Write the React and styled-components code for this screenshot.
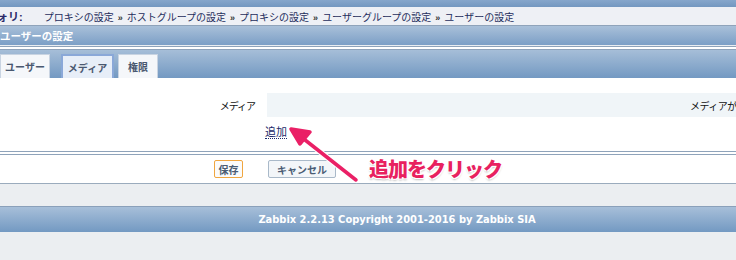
import styled, { createGlobalStyle } from 'styled-components';

const GlobalStyle = createGlobalStyle`
  html, body {
    margin: 0;
    padding: 0;
    background: #ebeef1;
    font-family: "Liberation Sans", "Noto Sans CJK JP", sans-serif;
    font-size: 11px;
  }
`;

const CRUMBS = ['プロキシの設定', 'ホストグループの設定', 'プロキシの設定', 'ユーザーグループの設定', 'ユーザーの設定'];
const TABS = ['ユーザー', 'メディア', '権限'];

const Page = styled.div`
  position: relative;
  width: 736px;
  height: 260px;
  overflow: hidden;
  background: #ebeef1;
`;

const TopBar = styled.div`
  height: 7px;
  background: linear-gradient(#86a6cb, #7397c0);
`;

const Breadcrumbs = styled.div`
  display: flex;
  align-items: center;
  height: 18px;
  background: #eef0f5;
  border-bottom: 1px solid #8fa3ba;
  color: #22305a;
  font-size: 10px;
  white-space: nowrap;
`;

const Favourite = styled.span`
  margin-left: -3px;
  margin-right: 21px;
  font-size: 11px;
  font-weight: bold;
  color: #2a2a6a;
`;

const Crumb = styled.span`
  color: #1e2d5c;
`;

const Sep = styled.span`
  margin: 0 4px;
  font-size: 9px;
  font-weight: bold;
  color: #333;
`;

const HeaderBar = styled.div`
  display: flex;
  align-items: center;
  height: 19px;
  background: linear-gradient(#a9c0d9, #7c9fc6);
  color: #fff;
  font-size: 10.5px;
  font-weight: bold;
`;

const DoubleRule = styled.div`
  height: 2px;
  border-top: 1px solid #8fa3ba;
  border-bottom: 1px solid #8fa3ba;
  background: #fff;
  margin-top: ${(p) => p.$top || 0}px;
`;

const TabBar = styled.div`
  display: flex;
  align-items: flex-end;
  gap: 4px;
  height: 28px;
  background: linear-gradient(#a6bed8, #7399c2);
`;

const Tab = styled.div`
  display: flex;
  align-items: center;
  justify-content: center;
  box-sizing: border-box;
  height: 24px;
  width: ${(p) => p.$width}px;
  margin-left: ${(p) => p.$offset || 0}px;
  background: ${(p) => (p.$active ? '#e7eef8' : '#f5f7fa')};
  border: ${(p) => (p.$active ? '2px solid #8aa8d8' : '1px solid #c9d4e2')};
  border-bottom: none;
  color: #4a5870;
  font-size: 10px;
  font-weight: bold;
`;

const Content = styled.div`
  background: #fff;
  padding-top: 15px;
  height: 58px;
`;

const FormRow = styled.div`
  display: flex;
  align-items: stretch;
  height: 24px;
`;

const Label = styled.div`
  display: flex;
  align-items: center;
  justify-content: flex-end;
  width: 255px;
  padding-right: 12px;
  font-size: 10px;
  letter-spacing: -1px;
  color: #111;
`;

const ValueCell = styled.div`
  display: flex;
  align-items: center;
  flex: 1;
  padding-left: 423px;
  background: #f0f5f8;
  white-space: nowrap;
  overflow: hidden;
  font-size: 10px;
  letter-spacing: -0.5px;
  color: #111;
`;

const AddRow = styled.div`
  padding: 6px 0 0 265px;
`;

const AddLink = styled.span`
  color: #1d2a6a;
  border-bottom: 1px dotted #1d2a6a;
`;

const ButtonRow = styled.div`
  display: flex;
  align-items: center;
  gap: 25px;
  height: 28px;
  padding-left: 214px;
  background: #fff;
  border-bottom: 1px solid #9aabbd;
`;

const Button = styled.div`
  display: flex;
  align-items: center;
  justify-content: center;
  box-sizing: border-box;
  height: 18px;
  width: ${(p) => p.$width}px;
  border: 1px solid ${(p) => (p.$primary ? '#f0a640' : '#a9b9c9')};
  border-radius: 2px;
  background: ${(p) => (p.$primary ? '#fbfbfb' : '#f3f6f9')};
  color: #4a5c74;
  font-size: 10px;
  font-weight: bold;
`;

const Spacer = styled.div`
  height: 22px;
`;

const Footer = styled.div`
  display: flex;
  align-items: center;
  justify-content: center;
  height: 25px;
  padding-left: 58px;
  border-top: 1px solid #8aa0ba;
  background: linear-gradient(#a7bfd9, #7399c2);
  color: #fff;
  font-family: "DejaVu Sans Condensed", "Liberation Sans", sans-serif;
  font-weight: bold;
  font-size: 11px;
`;

const Callout = styled.div`
  position: absolute;
  left: 369px;
  top: 154px;
  color: #e8215f;
  font-family: "Noto Sans CJK JP", sans-serif;
  font-weight: 900;
  font-size: 20px;
  letter-spacing: -1px;
  text-shadow:
    -1px -1px 0 #fff, 1px -1px 0 #fff, -1px 1px 0 #fff, 1px 1px 0 #fff,
    0 2px 2px rgba(0, 0, 0, 0.25);
`;

const ArrowSvg = styled.svg`
  position: absolute;
  left: 280px;
  top: 120px;
`;

const Arrow = () => (
  <ArrowSvg width="90" height="70" viewBox="0 0 90 70">
    <g stroke="#fff" strokeWidth="6" strokeLinecap="round" fill="#fff" strokeLinejoin="round">
      <line x1="76" y1="60" x2="20" y2="16" />
      <polygon points="11,9 30,12 20,24" />
    </g>
    <g stroke="#ea2066" strokeWidth="3.5" strokeLinecap="round" fill="#ea2066" strokeLinejoin="round">
      <line x1="76" y1="60" x2="20" y2="16" />
      <polygon points="11,9 30,12 20,24" />
    </g>
  </ArrowSvg>
);

export default function App() {
  return (
    <>
      <GlobalStyle />
      <Page>
        <TopBar />
        <Breadcrumbs>
          <Favourite>ォリ:</Favourite>
          {CRUMBS.map((c, i) => (
            <span key={i}>
              {i > 0 && <Sep>»</Sep>}
              <Crumb>{c}</Crumb>
            </span>
          ))}
        </Breadcrumbs>
        <HeaderBar>ユーザーの設定</HeaderBar>
        <DoubleRule $top={1} />
        <TabBar>
          <Tab $width={50}>{TABS[0]}</Tab>
          <Tab $width={53} $offset={7} $active>
            {TABS[1]}
          </Tab>
          <Tab $width={40}>{TABS[2]}</Tab>
        </TabBar>
        <Content>
          <FormRow>
            <Label>メディア</Label>
            <ValueCell>メディアが登録されていません</ValueCell>
          </FormRow>
          <AddRow>
            <AddLink>追加</AddLink>
          </AddRow>
        </Content>
        <DoubleRule />
        <ButtonRow>
          <Button $width={29} $primary>
            保存
          </Button>
          <Button $width={68}>キャンセル</Button>
        </ButtonRow>
        <Spacer />
        <Footer>Zabbix 2.2.13 Copyright 2001-2016 by Zabbix SIA</Footer>
        <Arrow />
        <Callout>追加をクリック</Callout>
      </Page>
    </>
  );
}
